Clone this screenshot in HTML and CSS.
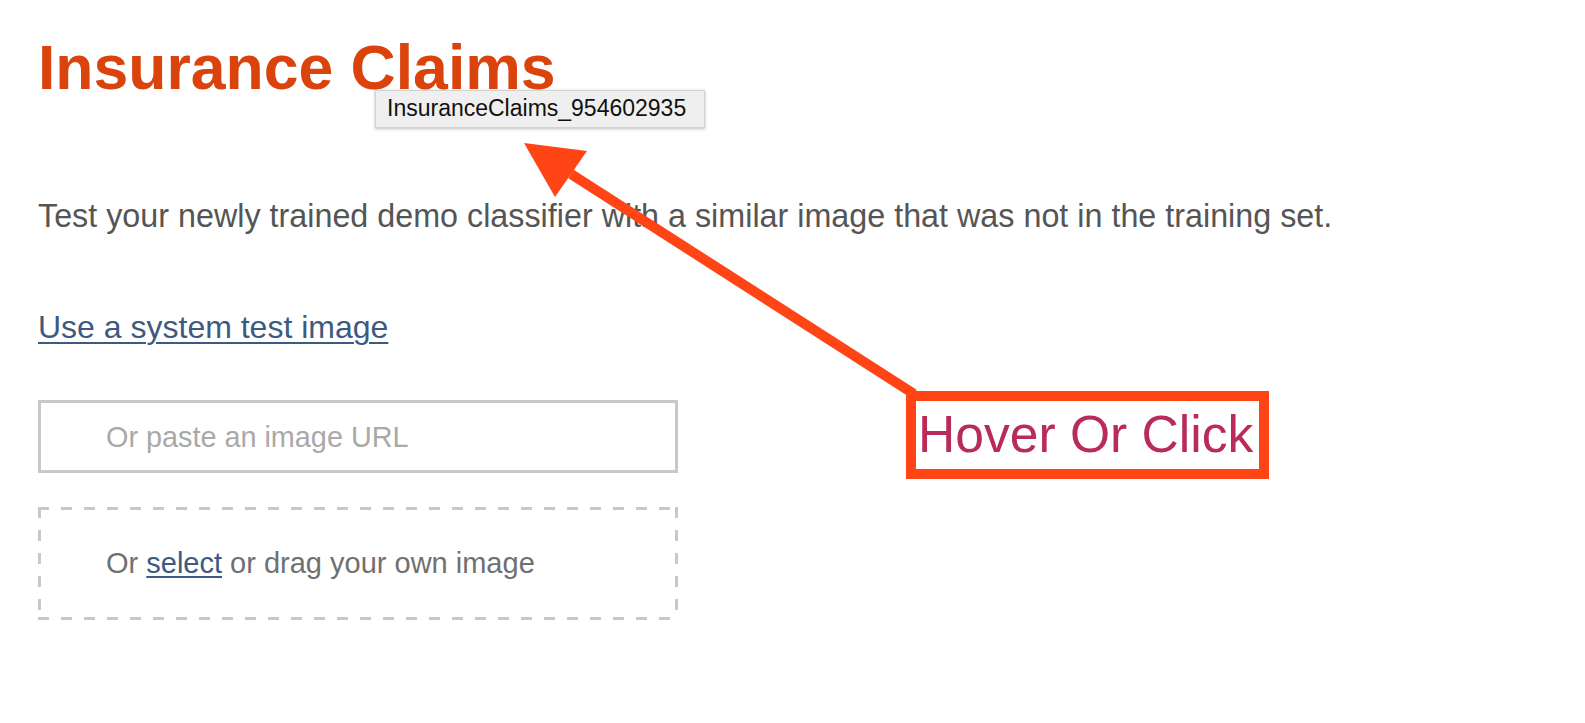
FILE: index.html
```html
<!DOCTYPE html>
<html lang="en">
<head>
<meta charset="utf-8">
<title>Insurance Claims</title>
<link rel="stylesheet" href="styles.css">
</head>
<body>
<main class="page">
  <h1 class="title">Insurance Claims</h1>
  <p class="intro">Test your newly trained demo classifier with a similar image that was not in the training set.</p>
  <a class="sys-link" href="#">Use a system test image</a>
  <div class="url-box"><span class="placeholder">Or paste an image URL</span></div>
  <div class="drop-box"><span class="drop-text">Or <a href="#" class="select-link">select</a> or drag your own image</span></div>
</main>

<div class="tooltip">InsuranceClaims_954602935</div>

<svg class="arrow" width="1585" height="723" viewBox="0 0 1585 723" xmlns="http://www.w3.org/2000/svg">
  <line x1="571" y1="174" x2="914" y2="394" stroke="#ff4416" stroke-width="10"/>
  <polygon points="524,143 587,151 555,197" fill="#ff4416"/>
</svg>

<div class="callout">Hover Or Click</div>
</body>
</html>
```

FILE: styles.css
```css
html, body {
  margin: 0;
  padding: 0;
  background: #ffffff;
}

body {
  font-family: "Liberation Sans", Arial, Helvetica, sans-serif;
  width: 1585px;
  height: 723px;
  overflow: hidden;
  position: relative;
}

.page {
  display: flex;
  flex-direction: column;
  align-items: flex-start;
  padding: 36px 0 0 38px;
}

.title {
  margin: 0;
  font-size: 62.5px;
  line-height: 62px;
  font-weight: bold;
  color: #db430c;
}

.intro {
  margin: 102px 0 0 0;
  font-size: 32.3px;
  line-height: 32px;
  color: #555555;
}

.sys-link {
  margin-top: 79px;
  font-size: 32px;
  line-height: 32px;
  color: #3d5a80;
  text-decoration: underline;
  text-decoration-thickness: 2px;
  text-underline-offset: 4px;
}

.url-box {
  margin-top: 57px;
  box-sizing: border-box;
  width: 640px;
  height: 73px;
  border: 3px solid #c8c8c8;
  padding-left: 65px;
  display: flex;
  align-items: center;
}

.placeholder {
  font-size: 28.8px;
  line-height: 67px;
  color: #a9a9a9;
  padding-top: 2px;
}

.drop-box {
  margin-top: 34px;
  box-sizing: border-box;
  width: 640px;
  height: 113px;
  padding: 3px 3px 3px 68px;
  display: flex;
  align-items: center;
  background:
    repeating-linear-gradient(90deg, #c8c8c8 0 11px, transparent 11px 23px) left top / 100% 3px no-repeat,
    repeating-linear-gradient(90deg, #c8c8c8 0 11px, transparent 11px 23px) left bottom / 100% 3px no-repeat,
    repeating-linear-gradient(180deg, #c8c8c8 0 11px, transparent 11px 23px) left top / 3px 100% no-repeat,
    repeating-linear-gradient(180deg, #c8c8c8 0 11px, transparent 11px 23px) right top / 3px 100% no-repeat;
}

.drop-text {
  font-size: 29px;
  line-height: 107px;
  color: #707070;
}

.select-link {
  color: #3d5a80;
  text-decoration: underline;
  text-decoration-thickness: 2px;
  text-underline-offset: 3px;
}

.tooltip {
  position: absolute;
  left: 375px;
  top: 90px;
  width: 330px;
  height: 38px;
  box-sizing: border-box;
  background: #efefef;
  border: 1px solid #d2d2d2;
  box-shadow: 0 1px 3px rgba(0, 0, 0, 0.25);
  font-size: 23px;
  line-height: 34px;
  padding-left: 11px;
  color: #111111;
}

.arrow {
  position: absolute;
  left: 0;
  top: 0;
  pointer-events: none;
}

.callout {
  position: absolute;
  left: 906px;
  top: 391px;
  width: 363px;
  height: 88px;
  box-sizing: border-box;
  border: 10px solid #ff4416;
  background: #ffffff;
  padding-left: 2px;
  font-size: 51.6px;
  line-height: 66px;
  color: #b82b5a;
  white-space: nowrap;
}
```
